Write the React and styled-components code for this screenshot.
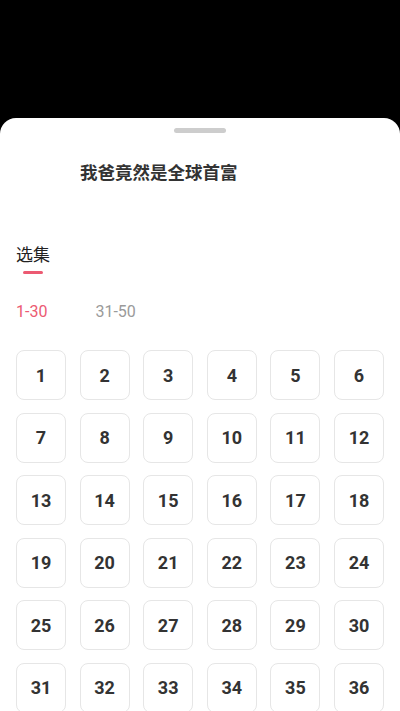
import React from "react";
import styled, { createGlobalStyle } from "styled-components";

const GlobalStyle = createGlobalStyle`
    html, body {
        margin: 0;
        padding: 0;
        background: #000;
    }
    body {
        font-family: Roboto, "Noto Sans CJK SC", sans-serif;
    }
`;

const Backdrop = styled.div`
    height: 118px;
`;

const Sheet = styled.div`
    background: #fff;
    border-radius: 16px 16px 0 0;
    min-height: 593px;
    padding: 0 16px;
    box-sizing: border-box;
    display: flex;
    flex-direction: column;
`;

const Handle = styled.div`
    align-self: center;
    width: 52px;
    height: 5px;
    border-radius: 3px;
    background: #cdcdcd;
    margin-top: 10px;
`;

const Title = styled.div`
    margin-top: 27px;
    padding-left: 64px;
    font-family: "Noto Sans CJK SC", sans-serif;
    font-size: 17.5px;
    font-weight: 700;
    line-height: 24px;
    color: #333;
`;

const TabRow = styled.div`
    margin-top: 58px;
    display: flex;
`;

const Tab = styled.div`
    display: flex;
    flex-direction: column;
    align-items: center;
    font-family: "Noto Sans CJK SC", sans-serif;
    font-size: 17px;
    line-height: 24px;
    color: #222;
`;

const TabLine = styled.span`
    width: 20px;
    height: 3px;
    border-radius: 2px;
    background: #ec5a72;
    margin-top: 5px;
`;

const RangeRow = styled.div`
    margin-top: 28px;
    display: flex;
    gap: 48px;
`;

const Range = styled.span`
    font-size: 16px;
    line-height: 20px;
    color: ${p => (p.active ? "#ec5a72" : "#9a9a9a")};
`;

const Grid = styled.div`
    margin-top: 28px;
    display: grid;
    grid-template-columns: repeat(6, 1fr);
    column-gap: 13.6px;
    row-gap: 12.5px;
`;

const Episode = styled.div`
    height: 50px;
    border: 1px solid #e6e6e6;
    border-radius: 8px;
    box-sizing: border-box;
    display: flex;
    align-items: center;
    justify-content: center;
    font-size: 18px;
    font-weight: 700;
    color: #333;
`;

const episodes = Array.from({ length: 36 }, (_, i) => i + 1);

export default function App() {
    return (
        <>
            <GlobalStyle />
            <Backdrop />
            <Sheet>
                <Handle />
                <Title>我爸竟然是全球首富</Title>
                <TabRow>
                    <Tab>
                        选集
                        <TabLine />
                    </Tab>
                </TabRow>
                <RangeRow>
                    <Range active>1-30</Range>
                    <Range>31-50</Range>
                </RangeRow>
                <Grid>
                    {episodes.map(n => (
                        <Episode key={n}>{n}</Episode>
                    ))}
                </Grid>
            </Sheet>
        </>
    );
}
